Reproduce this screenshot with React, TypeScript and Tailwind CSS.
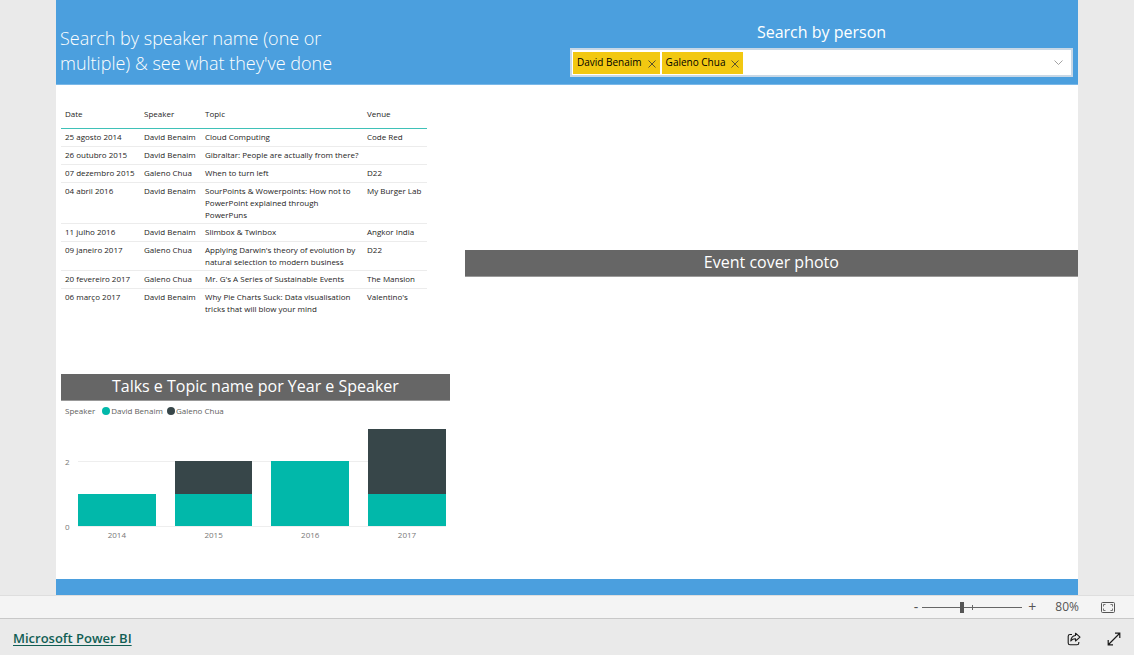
import { useState } from 'react'

const talks = [
  { date: '25 agosto 2014', speaker: 'David Benaim', topic: 'Cloud Computing', venue: 'Code Red' },
  { date: '26 outubro 2015', speaker: 'David Benaim', topic: 'Gibraltar: People are actually from there?', venue: '' },
  { date: '07 dezembro 2015', speaker: 'Galeno Chua', topic: 'When to turn left', venue: 'D22' },
  {
    date: '04 abril 2016',
    speaker: 'David Benaim',
    topic: 'SourPoints & Wowerpoints: How not to PowerPoint explained through PowerPuns',
    venue: 'My Burger Lab',
  },
  { date: '11 julho 2016', speaker: 'David Benaim', topic: 'Slimbox & Twinbox', venue: 'Angkor India' },
  {
    date: '09 janeiro 2017',
    speaker: 'Galeno Chua',
    topic: "Applying Darwin's theory of evolution by natural selection to modern business",
    venue: 'D22',
  },
  { date: '20 fevereiro 2017', speaker: 'Galeno Chua', topic: "Mr. G's A Series of Sustainable Events", venue: 'The Mansion' },
  {
    date: '06 março 2017',
    speaker: 'David Benaim',
    topic: 'Why Pie Charts Suck: Data visualisation tricks that will blow your mind',
    venue: "Valentino's",
  },
]

const years = [
  { year: 2014, david: 1, galeno: 0 },
  { year: 2015, david: 1, galeno: 1 },
  { year: 2016, david: 2, galeno: 0 },
  { year: 2017, david: 1, galeno: 2 },
]

const MAX_TALKS = 3

function PersonFilter() {
  const [people, setPeople] = useState(['David Benaim', 'Galeno Chua'])

  return (
    <div className="pl-[3px] pr-[5px] pt-5">
      <h2 id="person-label" className="text-center text-base leading-6 text-white">
        Search by person
      </h2>
      <div
        role="group"
        aria-labelledby="person-label"
        className="mt-1 flex h-[29px] items-center gap-0.5 border-2 border-[#c8d8e6] bg-white pl-px pr-2"
      >
        {people.map((person) => (
          <span key={person} className="flex h-[22px] items-center gap-1.5 bg-[#f2c811] px-1 text-[10px] text-black">
            {person}
            <button aria-label={`Remove ${person}`} onClick={() => setPeople(people.filter((p) => p !== person))}>
              <svg className="mt-0.5 size-2" viewBox="0 0 8 8" fill="none" stroke="#333" strokeWidth="0.8">
                <path d="M0.5 0.5l7 7M7.5 0.5l-7 7" />
              </svg>
            </button>
          </span>
        ))}
        <button aria-label="Open list" className="ml-auto">
          <svg className="h-[5px] w-[9px]" viewBox="0 0 9 5" fill="none" stroke="#999" strokeWidth="0.9">
            <path d="M0.5 0.5l4 4 4-4" />
          </svg>
        </button>
      </div>
    </div>
  )
}

function TalksTable() {
  return (
    <table className="ml-[5px] mt-4 w-[366px] table-fixed border-collapse text-left text-[8px] leading-3 text-[#252423]">
      <colgroup>
        <col className="w-[79px]" />
        <col className="w-[61px]" />
        <col className="w-[162px]" />
        <col />
      </colgroup>
      <thead>
        <tr className="h-[27px] border-b border-[#3fc1b8]">
          <th className="px-1 font-normal">Date</th>
          <th className="px-1 font-normal">Speaker</th>
          <th className="px-1 font-normal">Topic</th>
          <th className="px-1 font-normal">Venue</th>
        </tr>
      </thead>
      <tbody>
        {talks.map((talk) => (
          <tr key={talk.date} className="h-[18px] border-b border-[#ececec] align-top last:border-0">
            <td className="whitespace-nowrap px-1 py-0.5">{talk.date}</td>
            <td className="whitespace-nowrap px-1 py-0.5">{talk.speaker}</td>
            <td className="px-1 py-0.5">{talk.topic}</td>
            <td className="whitespace-nowrap px-1 py-0.5">{talk.venue}</td>
          </tr>
        ))}
      </tbody>
    </table>
  )
}

function TalksChart() {
  return (
    <section className="ml-[5px] mr-[15px] mt-auto pb-[38px]">
      <h2 className="h-[27px] border-b border-[#999] bg-[#666] text-center text-base leading-6 text-white">
        Talks e Topic name por Year e Speaker
      </h2>
      <div className="mt-1 flex h-3 items-center pl-1 text-[8px] leading-3 text-[#605e5c]">
        <span className="mr-[7px]">Speaker</span>
        <span className="mr-px size-2 rounded-full bg-[#01b8aa]" />
        <span className="mr-1">David Benaim</span>
        <span className="mr-px size-2 rounded-full bg-[#374649]" />
        <span>Galeno Chua</span>
      </div>
      <div className="mt-3 flex pl-1 pr-1 text-[8px] leading-3 text-[#777]">
        <div className="flex h-[104px] w-[13px] flex-col justify-between pt-[27px]">
          <span>2</span>
          <span>0</span>
        </div>
        <div className="flex-1">
          <div className="relative h-[98px] border-b border-[#eee]">
            <div className="absolute inset-x-0 top-1/3 border-t border-[#eee]" />
            <div className="relative flex h-full items-end gap-[19px]">
              {years.map((y) => (
                <div key={y.year} className="flex h-full flex-1 flex-col justify-end">
                  <div className="bg-[#374649]" style={{ height: `${(y.galeno / MAX_TALKS) * 100}%` }} />
                  <div className="bg-[#01b8aa]" style={{ height: `${(y.david / MAX_TALKS) * 100}%` }} />
                </div>
              ))}
            </div>
          </div>
          <div className="mt-0.5 flex gap-[19px]">
            {years.map((y) => (
              <span key={y.year} className="flex-1 text-center">
                {y.year}
              </span>
            ))}
          </div>
        </div>
      </div>
    </section>
  )
}

function ZoomBar() {
  return (
    <div className="flex h-6 items-center justify-end border-b border-t border-b-[#c8c8c8] border-t-[#dedede] bg-[#f4f4f4] pr-[19px] text-[#555]">
      <button aria-label="Zoom out" className="mr-1 text-sm leading-4">
        -
      </button>
      <div className="relative flex h-3 w-[100px] items-center">
        <span className="absolute left-1/2 h-[5px] w-px bg-[#666]" />
        <input
          type="range"
          aria-label="Zoom"
          defaultValue={39}
          className="relative h-px w-full appearance-none bg-[#666] [&::-webkit-slider-thumb]:h-[11px] [&::-webkit-slider-thumb]:w-1 [&::-webkit-slider-thumb]:appearance-none [&::-webkit-slider-thumb]:bg-[#555]"
        />
      </div>
      <button aria-label="Zoom in" className="ml-1.5 text-sm leading-4">
        +
      </button>
      <span className="ml-[19px] text-xs">80%</span>
      <button aria-label="Fit to page" className="ml-[22px]">
        <svg className="h-[11px] w-3.5" viewBox="0 0 14 11" fill="none" stroke="#555">
          <rect x="0.5" y="0.5" width="13" height="10" rx="1" />
          <path d="M2.5 4.500v-2h2M9.500 2.500h2v2M11.500 6.500v2h-2M4.500 8.500h-2v-2" strokeWidth="0.8" />
        </svg>
      </button>
    </div>
  )
}

function BottomBar() {
  return (
    <footer className="flex h-9 items-center bg-[#eaeaea] pl-[13px] pr-[13px] pt-1">
      <a href="#" className="text-[13px] font-semibold text-[#115e54] underline underline-offset-2">
        Microsoft Power BI
      </a>
      <button aria-label="Share" className="ml-auto">
        <svg className="size-3.5" viewBox="0 0 14 14" fill="none" stroke="#1a1a1a" strokeWidth="1.1" strokeLinejoin="round">
          <path d="M5 2.5H3A1.8 1.8 0 0 0 1.2 4.3V11A1.8 1.8 0 0 0 3 12.8h7A1.8 1.8 0 0 0 11.8 11v-1" />
          <path d="M8.5 1.2L13 5.2L8.5 9V6.8C6.3 6.7 5 7.4 3.8 9C4 6 5.5 3.7 8.5 3.5z" />
        </svg>
      </button>
      <button aria-label="Full screen" className="ml-[26px]">
        <svg className="size-3.5" viewBox="0 0 14 14" fill="none" stroke="#1a1a1a" strokeWidth="1.2">
          <path d="M1.5 12.5l11-11M8 1.2h4.800V6M1.2 8v4.800H6" />
        </svg>
      </button>
    </footer>
  )
}

export default function App() {
  return (
    <div className="flex min-h-screen flex-col bg-[#eaeaea] font-['Open_Sans',sans-serif]">
      <main className="mx-14 flex flex-1 flex-col bg-white">
        <header className="grid h-[85px] grid-cols-2 border-b border-[#7ab8e8] bg-[#4b9fde]">
          <h1 className="w-[300px] pl-1 pt-[26px] text-lg font-light leading-[25px] text-white">
            Search by speaker name (one or multiple) &amp; see what they've done
          </h1>
          <PersonFilter />
        </header>
        <div className="grid flex-1 grid-cols-[2fr_3fr]">
          <div className="flex flex-col">
            <TalksTable />
            <TalksChart />
          </div>
          <section className="pt-[165px]">
            <h2 className="h-[27px] border-b border-[#999] bg-[#666] text-center text-base leading-6 text-white">
              Event cover photo
            </h2>
          </section>
        </div>
        <div className="h-4 bg-[#4b9fde]" />
      </main>
      <ZoomBar />
      <BottomBar />
    </div>
  )
}
